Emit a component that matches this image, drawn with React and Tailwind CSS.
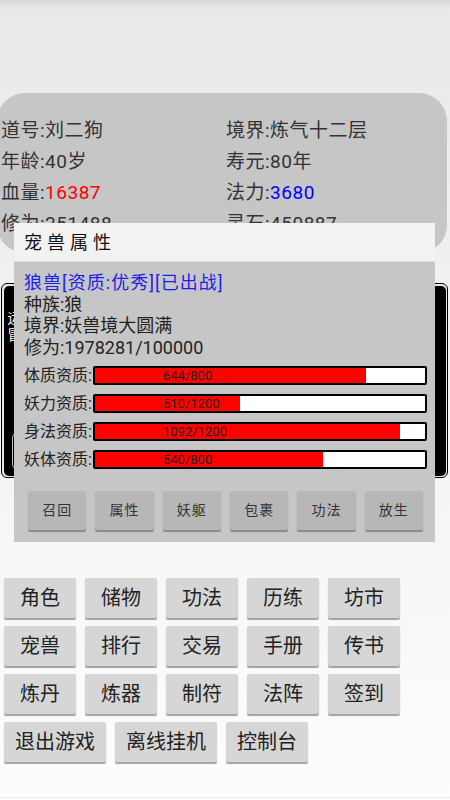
import React from 'react';

const font = { fontFamily: 'Roboto, "Noto Sans CJK SC", sans-serif' };

const stats = [
  { label: '体质资质:', value: 644, max: 800 },
  { label: '妖力资质:', value: 510, max: 1200 },
  { label: '身法资质:', value: 1092, max: 1200 },
  { label: '妖体资质:', value: 540, max: 800 },
];

const petActions = ['召回', '属性', '妖躯', '包裹', '功法', '放生'];

const menuRows = [
  ['角色', '储物', '功法', '历练', '坊市'],
  ['宠兽', '排行', '交易', '手册', '传书'],
  ['炼丹', '炼器', '制符', '法阵', '签到'],
  ['退出游戏', '离线挂机', '控制台'],
];

function MenuButton({ children }) {
  return (
    <button className="h-[40px] min-w-[72px] px-[11px] bg-[#d6d6d6] text-[#222] text-[20px] leading-none rounded-[2px] shadow-[0_1.5px_1px_rgba(0,0,0,0.35)]">
      {children}
    </button>
  );
}

export default function App() {
  return (
    <div style={font} className="relative w-[450px] h-[800px] overflow-hidden bg-gradient-to-b from-[#e9e9e9] to-[#fdfdfd] text-[#333]">
      {/* status bar shadow */}
      <div className="h-[8px] bg-gradient-to-b from-[#d6d6d6] to-[#e9e9e9]" />

      {/* character card */}
      <div className="mt-[85px] -ml-[3px] w-[450px] h-[160px] bg-[#c6c6c6] rounded-[28px] pt-[22px] pl-[4px] overflow-hidden">
        <div className="grid grid-cols-[225px_1fr] text-[19px] tracking-[0.5px] leading-[31px] text-[#333]">
          <div>道号:刘二狗</div>
          <div>境界:炼气十二层</div>
          <div>年龄:40岁</div>
          <div>寿元:80年</div>
          <div>血量:<span className="text-[#ff0000]">16387</span></div>
          <div>法力:<span className="text-[#0000ff]">3680</span></div>
          <div>修为:251488</div>
          <div>灵石:450887</div>
        </div>
      </div>

      {/* black panel underneath dialog */}
      <div className="mt-[30px] ml-[1px] w-[447px] h-[195px] border border-black bg-[#e6e6e6] p-[1.5px] rounded-[6px]">
        <div className="h-full bg-black rounded-[5px] pl-[4px] pt-[24px] text-white text-[14px] leading-[17px] flex flex-col">
          <div>运气</div>
          <div>冒险</div>
          <div className="mt-auto mb-[6px] ml-[4px] w-[60px] h-[38px] border border-[#bbb] rounded-[6px]" />
        </div>
      </div>

      {/* main menu */}
      <div className="mt-[100px] ml-[4px] flex flex-col gap-[8px]">
        {menuRows.map((row, i) => (
          <div key={i} className="flex gap-[9px]">
            {row.map((t) => (
              <MenuButton key={t}>{t}</MenuButton>
            ))}
          </div>
        ))}
      </div>

      <div className="absolute left-0 right-0 top-[797px] h-px bg-[#ececec]" />

      {/* pet dialog */}
      <div className="absolute left-[14px] top-[223px] w-[421px] h-[319px] bg-[#c6c6c6] flex flex-col">
        <div className="h-[39px] bg-[#f2f2f2] border-b border-[#dedede] pl-[10px] flex items-center text-[18px] tracking-[5px] text-[#111]">
          宠兽属性
        </div>
        <div className="pl-[10px] pr-[8px] pt-[10px] text-[18px] leading-[21.5px] text-[#222]">
          <div className="text-[#1e1ee6] tracking-[1px]">狼兽[资质:优秀][已出战]</div>
          <div>种族:狼</div>
          <div>境界:妖兽境大圆满</div>
          <div>修为:1978281/100000</div>
          <div className="mt-[3.5px] text-[16px]">
            {stats.map((s) => (
              <div key={s.label} className="h-[28px] flex items-center">
                <div className="w-[69px] shrink-0">{s.label}</div>
                <div className="relative w-[334px] h-[19px] border-2 border-black rounded-[2px] bg-white overflow-hidden">
                  <div className="absolute left-0 top-0 bottom-0 bg-[#ff0000]" style={{ width: `${(s.value / s.max) * 100 + 1.5}%` }} />
                  <div className="absolute inset-0 pl-[68px] flex items-center text-[13px] leading-none text-[#222]">
                    {s.value}/{s.max}
                  </div>
                </div>
              </div>
            ))}
          </div>
        </div>
        <div className="mt-[17px] pl-[14px] pr-[12px] flex gap-[9px]">
          {petActions.map((t) => (
            <button key={t} className="flex-1 h-[39px] bg-[#b7b7b7] text-[#333] text-[14px] tracking-[1px] rounded-[2px] shadow-[0_1.5px_1px_rgba(0,0,0,0.3)]">
              {t}
            </button>
          ))}
        </div>
      </div>
    </div>
  );
}
